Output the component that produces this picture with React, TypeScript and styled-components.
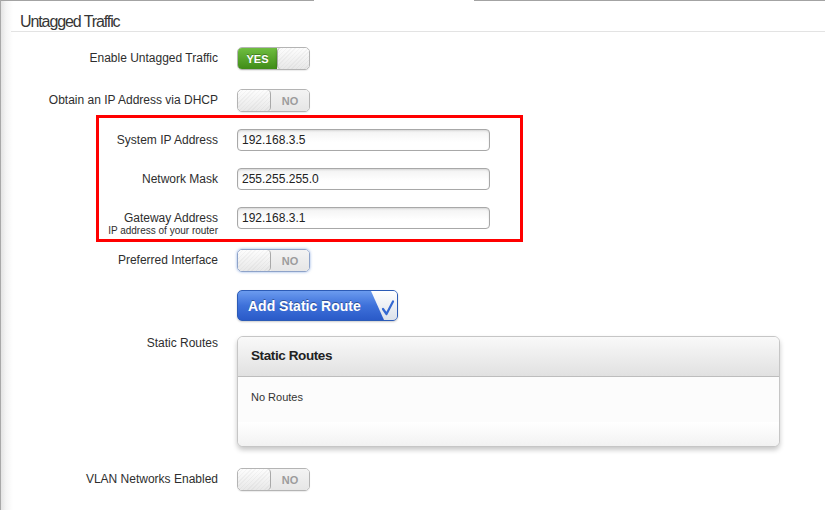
import React from "react";
import styled, { createGlobalStyle } from "styled-components";

const GlobalStyle = createGlobalStyle`
  html, body { margin: 0; padding: 0; background: #fff; }
  body { font-family: "Liberation Sans", Arial, sans-serif; }
`;

const Frame = styled.div`
  width: 825px;
  height: 510px;
  box-sizing: border-box;
  overflow: hidden;
  border-left: 1px solid #a9a9a9;
  background: linear-gradient(to right, #e4e4e4 0, #f5f5f5 5px, #fff 12px);
  display: flex;
  flex-direction: column;
`;

const TopEdge = styled.div`
  display: flex;
  height: 1px;
  flex-shrink: 0;
`;

const EdgeLine = styled.div<{ $w?: number }>`
  height: 1px;
  background: #a3a3a3;
  ${(p) => (p.$w ? `width: ${p.$w}px;` : "flex: 1;")}
`;

const EdgeGap = styled.div`
  width: 160px;
`;

const Heading = styled.h2`
  margin: 0 0 0 10px;
  padding: 12px 0 0 9px;
  font-size: 16px;
  line-height: 18px;
  font-weight: normal;
  color: #363636;
  letter-spacing: -1.1px;
  border-bottom: 1px solid #e3e3e3;
`;

const Form = styled.div`
  display: flex;
  flex-direction: column;
`;

const Row = styled.div<{ $mt: number }>`
  display: flex;
  align-items: flex-start;
  gap: 19px;
  margin-top: ${(p) => p.$mt}px;
`;

const LabelCell = styled.div<{ $lh?: number; $pt?: number }>`
  width: 217px;
  flex-shrink: 0;
  text-align: right;
  font-size: 12px;
  color: #2e2e2e;
  line-height: ${(p) => p.$lh ?? 23}px;
  padding-top: ${(p) => p.$pt ?? 0}px;
`;

const SubLabel = styled.div`
  font-size: 10px;
  line-height: 10px;
  color: #2e2e2e;
`;

const Highlight = styled.div`
  position: relative;
  display: flex;
  flex-direction: column;
`;

const Outline = styled.div`
  position: absolute;
  left: 95px;
  top: 3px;
  bottom: -6px;
  width: 427px;
  box-sizing: border-box;
  border: 3px solid #ff0000;
  pointer-events: none;
`;

const Track = styled.div<{ $focus?: boolean }>`
  display: flex;
  width: 73px;
  height: 23px;
  box-sizing: border-box;
  border: 1px solid ${(p) => (p.$focus ? "#8ea3c9" : "#b4b4b4")};
  border-radius: 5px;
  overflow: hidden;
  box-shadow: ${(p) =>
    p.$focus ? "0 0 3px rgba(70,120,210,0.6)" : "0 1px 1px rgba(0,0,0,0.08)"};
  font-size: 11px;
  font-weight: bold;
`;

const OnPart = styled.div`
  width: 39px;
  display: flex;
  align-items: center;
  justify-content: center;
  color: #fff;
  background: linear-gradient(#6fbd40, #3f8c18);
  text-shadow: 0 -1px 0 rgba(0, 0, 0, 0.3);
`;

const Knob = styled.div<{ $side: "left" | "right" }>`
  ${(p) =>
    p.$side === "left"
      ? "width: 32px; border-right: 1px solid #a9a9a9; box-shadow: 1px 0 2px rgba(0,0,0,0.15);"
      : "flex: 1; border-left: 1px solid #a9a9a9; box-shadow: -1px 0 2px rgba(0,0,0,0.15);"}
  border-radius: 4px;
  background: repeating-linear-gradient(
      135deg,
      rgba(0, 0, 0, 0.03) 0 1px,
      transparent 1px 3px
    ),
    linear-gradient(#fdfdfd, #e8e8e8);
`;

const OffPart = styled.div`
  flex: 1;
  display: flex;
  align-items: center;
  justify-content: center;
  color: #9c9c9c;
  background: linear-gradient(#f3f3f3, #e6e6e6);
`;

const TextInput = styled.input`
  width: 253px;
  height: 22px;
  box-sizing: border-box;
  border: 1px solid #a8a8a8;
  border-radius: 4px;
  padding: 0 0 0 4px;
  margin: 0;
  font: 12px "Liberation Sans", Arial, sans-serif;
  color: #222;
  background: linear-gradient(#f2f2f2, #fff 60%);
  box-shadow: inset 0 1px 2px rgba(0, 0, 0, 0.12);
  outline: none;
`;

const AddButton = styled.button`
  display: flex;
  align-items: stretch;
  width: 161px;
  height: 31px;
  padding: 0;
  margin: 0;
  box-sizing: border-box;
  border: 1px solid #2c5bb6;
  border-radius: 5px;
  overflow: hidden;
  color: #fff;
  background: linear-gradient(#6b9bef, #3e71da 50%, #2a5ac8);
  font: bold 14px "Liberation Sans", Arial, sans-serif;
  box-shadow: 0 1px 2px rgba(0, 0, 0, 0.2);
  cursor: pointer;
`;

const ButtonLabel = styled.span`
  flex: 1;
  display: flex;
  align-items: center;
  padding-left: 10px;
  text-shadow: 0 -1px 0 rgba(0, 0, 0, 0.35);
`;

const Wedge = styled.svg`
  flex: none;
  display: block;
  width: 28px;
  height: 29px;
`;

const Panel = styled.div`
  width: 543px;
  box-sizing: border-box;
  border: 1px solid #c6c6c6;
  border-radius: 6px;
  overflow: hidden;
  background: #fcfcfc;
  box-shadow: 0 3px 5px rgba(0, 0, 0, 0.22);
`;

const PanelHeader = styled.div`
  height: 40px;
  box-sizing: border-box;
  display: flex;
  align-items: center;
  padding: 0 0 3px 13px;
  border-bottom: 1px solid #bdbdbd;
  background: linear-gradient(#f9f9f9, #e1e1e1);
  font-size: 13.5px;
  font-weight: bold;
  letter-spacing: -0.4px;
  color: #222;
`;

const PanelBody = styled.div`
  height: 45px;
  box-sizing: border-box;
  padding: 13px 0 0 13px;
  font-size: 11px;
  line-height: 14px;
  color: #333;
`;

const PanelFooter = styled.div`
  height: 24px;
  background: linear-gradient(#fff, #f2f2f2);
`;

function Toggle({ on, focus }: { on: boolean; focus?: boolean }) {
  return (
    <Track $focus={focus}>
      {on ? (
        <>
          <OnPart>YES</OnPart>
          <Knob $side="right" />
        </>
      ) : (
        <>
          <Knob $side="left" />
          <OffPart>NO</OffPart>
        </>
      )}
    </Track>
  );
}

function CheckWedge() {
  return (
    <Wedge viewBox="0 0 28 29">
      <defs>
        <linearGradient id="wedgeFill" x1="0" y1="0" x2="0" y2="1">
          <stop offset="0" stopColor="#ffffff" />
          <stop offset="1" stopColor="#dce1ea" />
        </linearGradient>
      </defs>
      <polygon points="2,0 28,0 28,29 15,29" fill="url(#wedgeFill)" />
      <path
        d="M14 18 L17.5 23 L24 10.5"
        fill="none"
        stroke="#3468d2"
        strokeWidth="2.2"
        strokeLinecap="round"
        strokeLinejoin="round"
      />
    </Wedge>
  );
}

export default function App() {
  return (
    <>
      <GlobalStyle />
      <Frame>
        <TopEdge>
          <EdgeLine $w={313} />
          <EdgeGap />
          <EdgeLine />
        </TopEdge>
        <Heading>Untagged Traffic</Heading>
        <Form>
          <Row $mt={15}>
            <LabelCell>Enable Untagged Traffic</LabelCell>
            <Toggle on />
          </Row>
          <Row $mt={19}>
            <LabelCell>Obtain an IP Address via DHCP</LabelCell>
            <Toggle on={false} />
          </Row>
          <Highlight>
            <Row $mt={17}>
              <LabelCell $lh={22}>System IP Address</LabelCell>
              <TextInput defaultValue="192.168.3.5" />
            </Row>
            <Row $mt={17}>
              <LabelCell $lh={22}>Network Mask</LabelCell>
              <TextInput defaultValue="255.255.255.0" />
            </Row>
            <Row $mt={17}>
              <LabelCell $lh={16} $pt={3}>
                Gateway Address
                <SubLabel>IP address of your router</SubLabel>
              </LabelCell>
              <TextInput defaultValue="192.168.3.1" />
            </Row>
            <Outline />
          </Highlight>
          <Row $mt={13}>
            <LabelCell>Preferred Interface</LabelCell>
            <Toggle on={false} focus />
          </Row>
          <Row $mt={18}>
            <LabelCell />
            <AddButton type="button">
              <ButtonLabel>Add Static Route</ButtonLabel>
              <CheckWedge />
            </AddButton>
          </Row>
          <Row $mt={15}>
            <LabelCell $lh={14}>Static Routes</LabelCell>
            <Panel>
              <PanelHeader>Static Routes</PanelHeader>
              <PanelBody>No Routes</PanelBody>
              <PanelFooter />
            </Panel>
          </Row>
          <Row $mt={21}>
            <LabelCell>VLAN Networks Enabled</LabelCell>
            <Toggle on={false} />
          </Row>
        </Form>
      </Frame>
    </>
  );
}
